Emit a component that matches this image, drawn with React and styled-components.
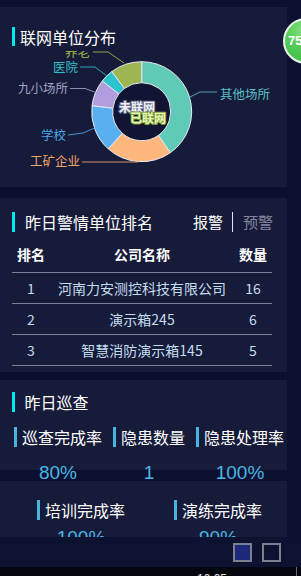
import React from "react";
import styled, { createGlobalStyle } from "styled-components";

const GlobalStyle = createGlobalStyle`
  html, body {
    margin: 0;
    padding: 0;
    background: #0b1030;
  }
  body {
    font-family: "Noto Sans CJK SC", "Noto Sans", sans-serif;
  }
`;

const Page = styled.div`
  position: relative;
  width: 301px;
  height: 576px;
  display: flex;
  flex-direction: column;
  overflow: hidden;
  background: #0b1030;
`;

const Main = styled.div`
  flex: 1;
  overflow: hidden;
  padding-top: 7px;
`;

const Column = styled.div`
  width: 287px;
  display: flex;
  flex-direction: column;
`;

const Panel = styled.section`
  background: #171b3a;
  height: ${(p) => (p.$h ? p.$h + "px" : "auto")};
  margin-bottom: ${(p) => p.$gap || 0}px;
  padding-top: ${(p) => p.$pt || 0}px;
  box-sizing: border-box;
`;

const TitleRow = styled.div`
  display: flex;
  align-items: center;
  justify-content: space-between;
  height: ${(p) => p.$h || 20}px;
  padding: 0 14px 0 12px;
`;

const Title = styled.h2`
  margin: 0;
  display: flex;
  align-items: center;
  height: 100%;
  font-size: 16px;
  font-weight: normal;
  color: #ffffff;
  line-height: 1;
  &::before {
    content: "";
    width: ${(p) => p.$bar || 3}px;
    height: 100%;
    background: #00e8f2;
    margin-right: ${(p) => p.$space || 10}px;
  }
`;

const Tabs = styled.div`
  display: flex;
  align-items: center;
  height: 20px;
`;

const Tab = styled.span`
  font-size: 15px;
  line-height: 20px;
  padding: 0 ${(p) => (p.$first ? 9 : 0)}px 0 ${(p) => (p.$first ? 0 : 10)}px;
  color: ${(p) => (p.$active ? "#ffffff" : "#85889c")};
  border-right: ${(p) => (p.$first ? "1px solid #e6e6ee" : "none")};
`;

const ChartSvg = styled.svg`
  display: block;
  margin-top: 5px;
  overflow: hidden;
`;

const Table = styled.div`
  width: 260px;
  margin: 12px 0 0 12px;
`;

const Row = styled.div`
  display: grid;
  grid-template-columns: 38px 1fr 38px;
  text-align: center;
  border-bottom: 1px solid #7b8099;
  font-size: 14px;
  white-space: nowrap;
  ${(p) =>
    p.$head
      ? `line-height: 20px; padding-bottom: 8px; color: #ffffff; font-weight: bold;`
      : `line-height: 30px; color: #c3ddef;`}
`;

const Stats = styled.div`
  display: flex;
  gap: ${(p) => p.$gap}px;
  padding-left: ${(p) => p.$left}px;
  margin-top: ${(p) => p.$top}px;
`;

const Stat = styled.div`
  display: flex;
  flex-direction: column;
`;

const StatLabel = styled.div`
  height: 20px;
  line-height: 20px;
  font-size: 16px;
  color: #ffffff;
  border-left: 3px solid #4ab4de;
  padding-left: 5px;
  white-space: nowrap;
`;

const StatValue = styled.div`
  margin-top: ${(p) => p.$top}px;
  text-align: center;
  font-family: "Liberation Sans", Arial, sans-serif;
  font-size: 19px;
  line-height: 22px;
  color: #4ab6e2;
`;

const BottomBar = styled.div`
  height: 30px;
  flex-shrink: 0;
  display: flex;
  align-items: center;
  justify-content: flex-end;
  gap: 10px;
  padding-right: 20px;
  background: #0c1230;
`;

const Square = styled.span`
  width: 19px;
  height: 19px;
  box-sizing: border-box;
  border: 2px solid #7c7f8f;
  background: ${(p) => (p.$filled ? "#1c297a" : "transparent")};
`;

const Footer = styled.div`
  height: 9px;
  flex-shrink: 0;
  display: flex;
  background: #05070e;
  overflow: hidden;
`;

const Clock = styled.span`
  margin-left: 197px;
  padding-top: 5px;
  font-family: "Liberation Sans", Arial, sans-serif;
  font-size: 12px;
  line-height: 14px;
  color: #e8e8e8;
`;

const VLine = styled.span`
  margin-left: auto;
  margin-right: 4px;
  width: 1px;
  background: #6a6d78;
`;

const Badge = styled.div`
  position: absolute;
  left: 283px;
  top: 18px;
  width: 46px;
  height: 46px;
  box-sizing: border-box;
  border-radius: 50%;
  border: 2px solid #eef3ee;
  background: radial-gradient(circle at 45% 25%, #86e27f 0%, #52cc56 45%, #3cb846 100%);
  color: #ffffff;
  font-family: "Liberation Sans", Arial, sans-serif;
  font-weight: bold;
  font-size: 13px;
  line-height: 42px;
  padding-left: 3px;
`;

const CX = 141.7;
const CY = 111.7;
const RO = 50;
const RI = 29;

const pt = (deg, r) => {
  const a = (deg * Math.PI) / 180;
  return [CX + r * Math.sin(a), CY - r * Math.cos(a)];
};

const arc = (a0, a1) => {
  const large = a1 - a0 > 180 ? 1 : 0;
  const [x0, y0] = pt(a0, RO);
  const [x1, y1] = pt(a1, RO);
  const [x2, y2] = pt(a1, RI);
  const [x3, y3] = pt(a0, RI);
  return `M${x0} ${y0} A${RO} ${RO} 0 ${large} 1 ${x1} ${y1} L${x2} ${y2} A${RI} ${RI} 0 ${large} 0 ${x3} ${y3} Z`;
};

const slices = [
  { name: "其他场所", from: 0, to: 145, color: "#5fcab6", text: "#58c0c6", lx: 220, ly: 98.5, line: "190,97 200,92 217,92" },
  { name: "工矿企业", from: 145, to: 222, color: "#fdb77c", text: "#f0a566", lx: 30, ly: 165.5, line: "82,162 138,162" },
  { name: "学校", from: 222, to: 277, color: "#5aaff0", text: "#4aa8e6", lx: 41, ly: 139.5, line: "68,135 83,133 97,127" },
  { name: "九小场所", from: 277, to: 308, color: "#b29ede", text: "#a4a2c6", lx: 18, ly: 93, line: "70,88.5 85,88.5 97,93" },
  { name: "医院", from: 308, to: 323.4, color: "#2cc3cf", text: "#31c0ca", lx: 53, ly: 72, line: "80,67 95,67 107,76" },
  { name: "养老", from: 323.4, to: 360, color: "#9db653", text: "#a7bd48", lx: 65, ly: 57, line: "93,52 108,52 124,63" },
];

function DonutChart() {
  return (
    <ChartSvg width="287" height="136" viewBox="0 51 287 136">
      <circle cx={CX} cy={CY} r={RI} fill="#111533" />
      {slices.map((s) => (
        <path key={s.name} d={arc(s.from, s.to)} fill={s.color} stroke="#e9ebf2" strokeWidth="1" />
      ))}
      {slices.map((s) => (
        <g key={s.name + "-l"}>
          <polyline points={s.line} fill="none" stroke={s.text} strokeWidth="1" opacity="0.85" />
          <text x={s.lx} y={s.ly} fill={s.text} fontSize="12.5" fontFamily='"Noto Sans CJK SC", sans-serif'>
            {s.name}
          </text>
        </g>
      ))}
      <text
        x="119"
        y="112"
        fontSize="12"
        fontWeight="bold"
        fill="#f0f1f8"
        stroke="#6a6e8a"
        strokeWidth="2"
        paintOrder="stroke"
        fontFamily='"Noto Sans CJK SC", sans-serif'
      >
        未联网
      </text>
      <text
        x="130"
        y="123"
        fontSize="12"
        fontWeight="bold"
        fill="#e6f6b4"
        stroke="#7c9a3c"
        strokeWidth="2"
        paintOrder="stroke"
        fontFamily='"Noto Sans CJK SC", sans-serif'
      >
        已联网
      </text>
    </ChartSvg>
  );
}

const ranking = [
  { rank: 1, name: "河南力安测控科技有限公司", count: 16 },
  { rank: 2, name: "演示箱245", count: 6 },
  { rank: 3, name: "智慧消防演示箱145", count: 5 },
];

export default function App() {
  return (
    <Page>
      <GlobalStyle />
      <Main>
        <Column>
          <Panel $h={180} $gap={11} $pt={20}>
            <TitleRow $h={19}>
              <Title $space={5}>联网单位分布</Title>
            </TitleRow>
            <DonutChart />
          </Panel>

          <Panel $h={174} $gap={8} $pt={14}>
            <TitleRow>
              <Title>昨日警情单位排名</Title>
              <Tabs>
                <Tab $first $active>报警</Tab>
                <Tab>预警</Tab>
              </Tabs>
            </TitleRow>
            <Table>
              <Row $head>
                <span>排名</span>
                <span>公司名称</span>
                <span>数量</span>
              </Row>
              {ranking.map((r) => (
                <Row key={r.rank}>
                  <span>{r.rank}</span>
                  <span>{r.name}</span>
                  <span>{r.count}</span>
                </Row>
              ))}
            </Table>
          </Panel>

          <Panel $h={90} $gap={11} $pt={12}>
            <TitleRow>
              <Title $bar={2.5}>昨日巡查</Title>
            </TitleRow>
            <Stats $gap={11} $left={14} $top={15}>
              <Stat>
                <StatLabel>巡查完成率</StatLabel>
                <StatValue $top={15}>80%</StatValue>
              </Stat>
              <Stat>
                <StatLabel>隐患数量</StatLabel>
                <StatValue $top={15}>1</StatValue>
              </Stat>
              <Stat>
                <StatLabel>隐患处理率</StatLabel>
                <StatValue $top={15}>100%</StatValue>
              </Stat>
            </Stats>
          </Panel>

          <Panel $h={90} $pt={19}>
            <Stats $gap={49} $left={37} $top={0}>
              <Stat>
                <StatLabel>培训完成率</StatLabel>
                <StatValue $top={7}>100%</StatValue>
              </Stat>
              <Stat>
                <StatLabel>演练完成率</StatLabel>
                <StatValue $top={7}>90%</StatValue>
              </Stat>
            </Stats>
          </Panel>
        </Column>
      </Main>
      <BottomBar>
        <Square $filled />
        <Square />
      </BottomBar>
      <Footer>
        <Clock>10:05</Clock>
        <VLine />
      </Footer>
      <Badge>75</Badge>
    </Page>
  );
}
